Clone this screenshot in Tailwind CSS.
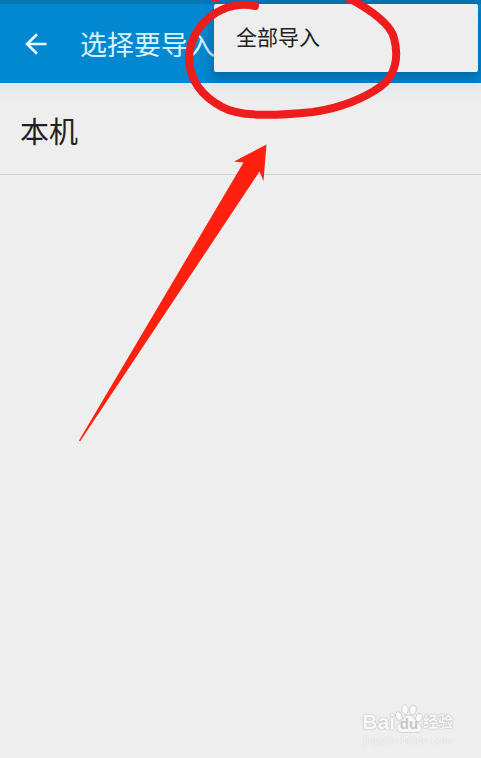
<!DOCTYPE html>
<html lang="zh-CN">
<head>
<meta charset="utf-8">
<meta name="viewport" content="width=device-width, initial-scale=1">
<title>选择要导入</title>
<script src="https://cdn.jsdelivr.net/npm/@tailwindcss/browser@4"></script>
</head>
<body class="relative flex min-h-screen flex-col overflow-x-hidden bg-[#eeeeee] font-['Roboto','Noto_Sans_CJK_SC',sans-serif] text-[#212121]">
  <header class="relative border-t-4 border-[#0476b4] bg-[#0288d1]">
    <div class="flex h-[79px] items-center gap-8 pl-6">
      <button type="button" aria-label="返回" class="size-6 text-[#e8f7fd]">
        <svg viewBox="0 0 24 24" class="size-6" fill="none" stroke="currentColor" stroke-width="2.7"><path d="M22.500 12H3M13 2.200L3 12l10 9.800"/></svg>
      </button>
      <h1 class="pt-1 text-[27px] leading-10 font-normal whitespace-nowrap text-[#d9f1fb]">选择要导入</h1>
    </div>
    <div role="menu" class="absolute top-0 right-[3px] flex h-[68px] w-[264px] rounded-xs bg-[#eeeeee] shadow-[0_6px_12px_2px_rgba(0,40,90,0.3)]">
      <button type="button" role="menuitem" class="flex-1 px-[22px] text-left text-[21px] leading-8">全部导入</button>
    </div>
    <div class="absolute inset-x-0 top-[79px] h-8 bg-linear-to-b from-[#e4e6e8] via-[#ededed] to-[#eeeeee]"></div>
  </header>
  <main class="relative flex-1">
    <ul>
      <li class="border-b border-[#d4d4d4]"><button type="button" class="flex h-[91px] w-full items-center px-5 pt-2 text-left text-[29px] leading-10">本机</button></li>
    </ul>
  </main>
  <footer class="flex justify-end pr-7 pb-3">
    <div class="flex flex-col items-center font-['Liberation_Sans','Noto_Sans_CJK_SC',sans-serif] text-[#f8f8f8] [text-shadow:0_0_1px_#b0b0b0,0_0_2px_#c0c0c0]">
      <div class="flex h-8 items-end">
        <span class="text-[21px] leading-6 font-bold">Bai</span>
        <span class="relative flex h-8 w-7 items-end justify-center">
          <svg viewBox="0 0 28 32" class="absolute inset-0 h-8 w-7" fill="#f8f8f8" stroke="#cacaca" stroke-width="0.800"><ellipse cx="3.800" cy="14" rx="3.200" ry="4.300" transform="rotate(-15 4 14)"/><ellipse cx="10" cy="7.500" rx="3.200" ry="4.700"/><ellipse cx="18" cy="8" rx="3.300" ry="4.700" transform="rotate(10 18 7.500)"/><ellipse cx="24" cy="15.500" rx="3.200" ry="4.300" transform="rotate(18 23.500 15.500)"/><path d="M13.500 13C9 13 8.500 18 4.500 21S1 30.500 7 30.500c3 0 10-.5 14 0 6 .5 7-6 3-9S18 13 13.500 13Z"/></svg>
          <span class="relative text-[15px] leading-5 font-bold text-[#c6c6c6] [text-shadow:none]">du</span>
        </span>
        <span class="text-[15px] leading-6 font-bold">经验</span>
      </div>
      <span class="text-[11px] leading-3 [text-shadow:0_0_1px_#c0c0c0]">jingyan.baidu.com</span>
    </div>
  </footer>
  <svg aria-hidden="true" class="pointer-events-none absolute top-0 left-0 h-[450px] w-[481px]" viewBox="0 0 481 450">
    <path d="M255 6C243 3 225 5 210 17C196 28 189 44 189 60C190 78 200 95 222 107C240 117 274 116 313 112C342 108 366 97 380 87C396 76 399 56 394 38C391 25 371 10 347-3" fill="none" stroke="#ee1c1c" stroke-width="8" stroke-linecap="round"/>
    <path d="M212 0L219 0" stroke="#ee1c1c" stroke-width="3"/>
    <path d="M266.500 144.500L234 161.500L243.500 162.500L79 440.500L80 441.500L259.500 171.500L263.500 181Z" fill="#ff2010"/>
  </svg>
</body>
</html>
